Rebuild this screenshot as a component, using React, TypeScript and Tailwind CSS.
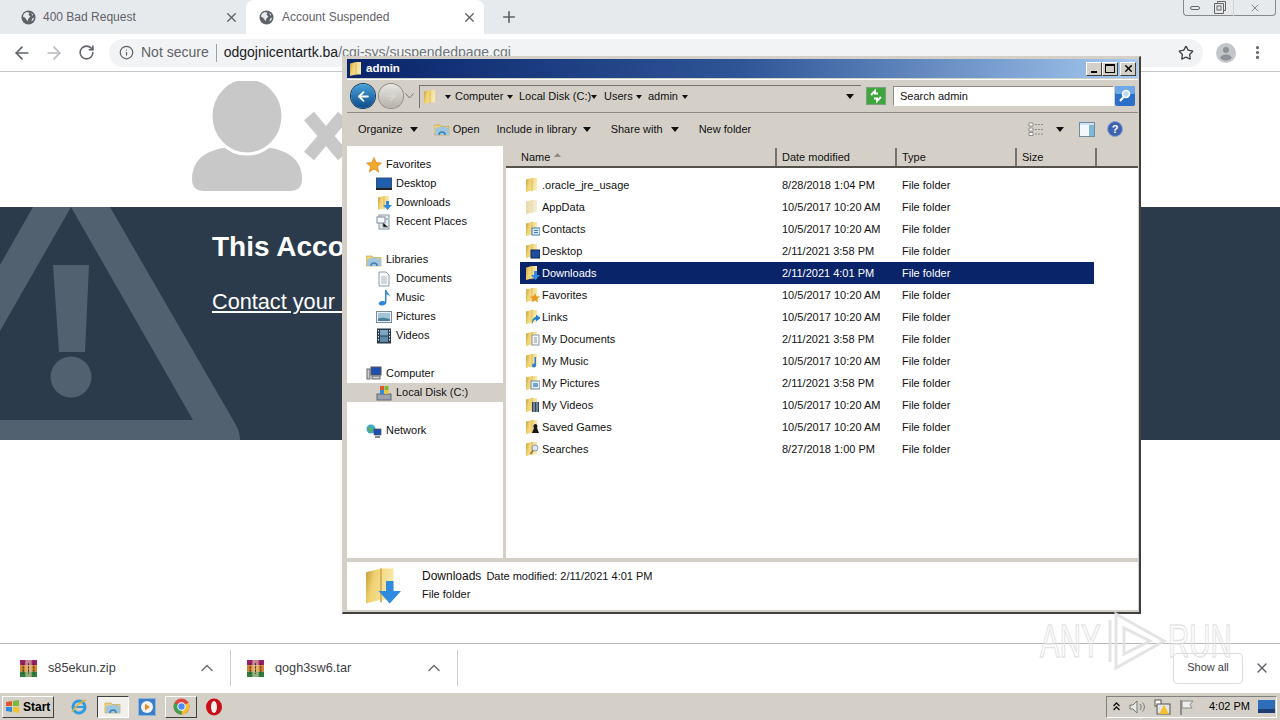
import {
  ArrowLeft,
  ArrowRight,
  ChevronUp,
  Info,
  MoreVertical,
  Plus,
  RotateCw,
  Star,
  X,
} from "lucide-react";

const FILES = [
  { name: ".oracle_jre_usage", date: "8/28/2018 1:04 PM", badge: "" },
  { name: "AppData", date: "10/5/2017 10:20 AM", badge: "pale" },
  { name: "Contacts", date: "10/5/2017 10:20 AM", badge: "contacts" },
  { name: "Desktop", date: "2/11/2021 3:58 PM", badge: "desktop" },
  { name: "Downloads", date: "2/11/2021 4:01 PM", badge: "down" },
  { name: "Favorites", date: "10/5/2017 10:20 AM", badge: "star" },
  { name: "Links", date: "10/5/2017 10:20 AM", badge: "link" },
  { name: "My Documents", date: "2/11/2021 3:58 PM", badge: "doc" },
  { name: "My Music", date: "10/5/2017 10:20 AM", badge: "music" },
  { name: "My Pictures", date: "2/11/2021 3:58 PM", badge: "pic" },
  { name: "My Videos", date: "10/5/2017 10:20 AM", badge: "video" },
  { name: "Saved Games", date: "10/5/2017 10:20 AM", badge: "games" },
  { name: "Searches", date: "8/27/2018 1:00 PM", badge: "search" },
];

function Badge({ kind }: { kind: string }) {
  switch (kind) {
    case "contacts":
      return (
        <>
          <rect x="8" y="7" width="8" height="7" fill="#dbe9f6" stroke="#3f7fb5" />
          <path d="M10 9.500h4M10 11.500h4" stroke="#3f7fb5" />
        </>
      );
    case "desktop":
      return <rect x="7" y="7" width="9" height="8" fill="#1d4f9c" stroke="#10264f" />;
    case "down":
      return <path d="M10 6h3v4h3l-4.500 5L7 10h3z" fill="#2f8be0" />;
    case "star":
      return <path d="M11 6l1.500 3.200 3.500.4-2.600 2.300.7 3.400-3.100-1.700-3.100 1.700.7-3.400L6 9.600l3.500-.4z" fill="#e89a1c" />;
    case "link":
      return <path d="M8 15c0-5 2-7 4-7V5.500L16.500 9 12 12.500V10.500c-2 0-3 2-4 4.500z" fill="#1f7fd0" />;
    case "doc":
      return (
        <>
          <rect x="8" y="4" width="7" height="10" fill="#f4f6f8" stroke="#8a97a5" />
          <path d="M10 7h3M10 9h3M10 11h3" stroke="#8a97a5" />
        </>
      );
    case "music":
      return <path d="M12 4v8.500a2 2 0 1 1-1.500-1.900V4z" fill="#2f7fd0" />;
    case "pic":
      return (
        <>
          <rect x="7" y="6" width="9" height="8" fill="#e6eef5" stroke="#7a8a99" />
          <rect x="9" y="8" width="5" height="4" fill="#6fa6c8" />
        </>
      );
    case "video":
      return (
        <>
          <rect x="8" y="5" width="7" height="10" fill="#34465a" />
          <path d="M10 5v10M13 5v10" stroke="#a9bfd2" />
        </>
      );
    case "games":
      return <path d="M11 5a2.500 2.500 0 0 1 2 4l2 5H8l2-5a2.500 2.500 0 0 1 1-4z" fill="#161616" />;
    case "search":
      return (
        <>
          <circle cx="11" cy="7" r="3" fill="#dfe8ef" stroke="#8c9aa8" />
          <path d="M9 9.500L6.500 13" stroke="#8c7440" strokeWidth="1.500" />
        </>
      );
    default:
      return null;
  }
}

// small win7 style folder, seen nearly edge on
function Folder({ badge = "", size = 16 }: { badge?: string; size?: number }) {
  const pale = badge === "pale";
  return (
    <svg width={size} height={size} viewBox="0 0 16 16" className="shrink-0">
      <defs>
        <linearGradient id="folderFace" x1="0" y1="0" x2="1" y2="0.3">
          <stop offset="0" stopColor="#c89b3a" />
          <stop offset="0.35" stopColor="#f0d272" />
          <stop offset="1" stopColor="#f8e9ae" />
        </linearGradient>
        <linearGradient id="folderPale" x1="0" y1="0" x2="1" y2="0">
          <stop offset="0" stopColor="#e6d6a6" />
          <stop offset="1" stopColor="#f8f0d6" />
        </linearGradient>
      </defs>
      <path d="M2 2.500L8 1h5v12.500H8L2 15z" fill={pale ? "url(#folderPale)" : "url(#folderFace)"} />
      <path d="M8 1v13.500" stroke={pale ? "#eadcb4" : "#d8b355"} strokeWidth=".8" />
      <Badge kind={badge} />
    </svg>
  );
}

function Globe() {
  return (
    <svg width="15" height="15" viewBox="0 0 16 16" className="shrink-0">
      <circle cx="8" cy="8" r="7.500" fill="#5f6368" />
      <path d="M3 4l3-2 3 1-1 2 2 2-2 2-1 3-2-3-1-1-2-1zM11 3l2 2-1 1zM12 9l2-1-1 3-2 1z" fill="#e7eaed" />
    </svg>
  );
}

function Tab({ title, active }: { title: string; active?: boolean }) {
  return (
    <div
      className={`flex h-[34px] w-[238px] items-center pl-[13px] pr-[6px] ${
        active ? "rounded-t-lg bg-white" : ""
      }`}
    >
      <Globe />
      <span className={`flex-1 text-[12px] text-[#5f6368] ${active ? "ml-[8px]" : "ml-[7px]"}`}>
        {title}
      </span>
      <X size={15} strokeWidth={2.2} className="mr-[1px] text-[#5f6368]" />
    </div>
  );
}

function WinRar() {
  return (
    <svg width="17" height="17" viewBox="0 0 16 16" className="shrink-0">
      <rect x="0" y="0" width="16" height="5" fill="#9c1f6a" />
      <rect x="0" y="5" width="16" height="6" fill="#d9832a" />
      <rect x="0" y="11" width="16" height="5" fill="#2f7d3a" />
      <rect x="5" y="0" width="6" height="16" fill="#e9d9b4" opacity="0.55" />
      <path d="M3 3v10M8 3v10M13 3v10" stroke="#3b2a1a" strokeWidth="1" strokeDasharray="2 1" />
    </svg>
  );
}

function DownloadItem({ name, className }: { name: string; className: string }) {
  return (
    <div className={`flex h-[36px] items-center border-r border-[#cfd1d3] ${className}`}>
      <WinRar />
      <span className="ml-[11px] flex-1 pt-[2px] text-[12.700px] text-[#3c4043]">{name}</span>
      <ChevronUp size={20} strokeWidth={2} className="mr-[13px] text-[#777]" />
    </div>
  );
}

function Caret({ className = "" }: { className?: string }) {
  return (
    <span
      className={`inline-block h-0 w-0 shrink-0 border-x-[3.500px] border-t-[4px] border-x-transparent border-t-[#111] ${className}`}
    />
  );
}

function NavRow({
  label,
  depth,
  icon,
  selected,
}: {
  label: string;
  depth: 0 | 1;
  icon: React.ReactNode;
  selected?: boolean;
}) {
  return (
    <div
      className={`flex h-[19px] items-center ${depth ? "pl-[29px]" : "pl-[19px]"} ${
        selected ? "bg-[#d4d0c8]" : ""
      }`}
    >
      <span className="flex w-[20px] shrink-0">{icon}</span>
      <span>{label}</span>
    </div>
  );
}

function Glyph({ children }: { children: React.ReactNode }) {
  return (
    <svg width="16" height="16" viewBox="0 0 16 16" className="shrink-0">
      {children}
    </svg>
  );
}

const LIBRARY_PATHS = (
  <>
    <path d="M0 4h6l1 1.500h8V14H0z" fill="#efd37c" stroke="#bf9a3c" strokeWidth=".6" />
    <path d="M1 8c2-3 12-3 14 0v6H1z" fill="#9fc6dd" />
    <path d="M5 14c0-4 6-4 6 0" fill="none" stroke="#3c7fb5" strokeWidth="1.500" />
  </>
);

const NAV_ICONS = {
  star: (
    <Glyph>
      <path d="M8 .5l2.200 5 5.300.5-4 3.500 1.200 5.500L8 12l-4.700 3 1.200-5.500-4-3.500 5.300-.5z" fill="#f3a92b" stroke="#c97a16" strokeWidth=".6" />
    </Glyph>
  ),
  desktop: (
    <Glyph>
      <rect x="0.500" y="2" width="15" height="10" fill="#1f5fb0" stroke="#33507a" />
      <rect x="0" y="12" width="16" height="2" fill="#222" />
    </Glyph>
  ),
  recent: (
    <Glyph>
      <rect x="3" y="1" width="10" height="14" fill="#e8ebee" stroke="#8c98a3" />
      <rect x="1" y="3" width="8" height="6" fill="#f6f8fa" stroke="#7f8b96" />
      <path d="M7 9v4h5M10 5h2" stroke="#77838e" />
    </Glyph>
  ),
  library: <Glyph>{LIBRARY_PATHS}</Glyph>,
  doc: (
    <Glyph>
      <path d="M3 1h7l3 3v11H3z" fill="#f8f9fb" stroke="#8d99a6" />
      <path d="M5 6h6M5 8h6M5 10h6M5 12h6" stroke="#aab4be" />
    </Glyph>
  ),
  music: (
    <Glyph>
      <path d="M9 0h1.500c0 3 3.500 3.500 3.500 7-1-2-2.500-2.500-3.500-2.500V12c0 2-2 3.500-4.500 3.500S2 14 3 12.500 7 10.500 9 11.500z" fill="#2f86d6" />
    </Glyph>
  ),
  picture: (
    <Glyph>
      <rect x="0.500" y="2.500" width="15" height="11" fill="#e9eef2" stroke="#7e8a96" />
      <rect x="2" y="4" width="12" height="8" fill="#9fc4da" />
      <path d="M2 10c3-2 6-1 12 0v2H2z" fill="#4e7f99" />
    </Glyph>
  ),
  video: (
    <Glyph>
      <rect x="1" y="0.500" width="14" height="15" fill="#2a3a4a" />
      <rect x="4" y="2" width="8" height="5.500" fill="#7fa6c4" />
      <rect x="4" y="8.500" width="8" height="5.500" fill="#5b8aa8" />
      <path d="M2.500 2v12M13.500 2v12" stroke="#dfe7ee" strokeDasharray="1.500 1.500" />
    </Glyph>
  ),
  computer: (
    <Glyph>
      <rect x="5" y="1" width="10" height="8" fill="#1f4fb0" stroke="#555" />
      <rect x="1" y="3" width="3" height="10" fill="#c9cdd2" stroke="#666" />
      <rect x="6" y="10" width="8" height="3" fill="#c9cdd2" stroke="#666" />
    </Glyph>
  ),
  disk: (
    <Glyph>
      <rect x="1" y="9" width="14" height="6" fill="#9ca4ab" stroke="#5f676e" />
      <rect x="4" y="1" width="4" height="4" fill="#e2562d" />
      <rect x="8.500" y="1" width="4" height="4" fill="#7cb83a" />
      <rect x="4" y="5" width="4" height="4" fill="#2f8be0" />
      <rect x="8.500" y="5" width="4" height="4" fill="#f2c12e" />
    </Glyph>
  ),
  network: (
    <Glyph>
      <circle cx="5" cy="6" r="4.500" fill="#3fa8c8" />
      <path d="M2 5c2-2 3 0 4 1s-1 3-2 3z" fill="#5fb04a" />
      <rect x="8" y="6" width="7" height="6" fill="#1f4fb0" stroke="#444" strokeWidth=".6" />
      <rect x="9" y="13" width="5" height="2" fill="#888" />
    </Glyph>
  ),
};

function ColHead({
  label,
  width,
  sorted,
}: {
  label: string;
  width: string;
  sorted?: boolean;
}) {
  return (
    <div className={`flex h-full items-center border-r-2 border-r-[#77736c] pl-[5px] ${width}`}>
      {label}
      {sorted && (
        <svg width="7" height="4" viewBox="0 0 7 4" className="mb-[4px] ml-[4px]">
          <path d="M0 4l3.500-4L7 4z" fill="#8f8b84" />
        </svg>
      )}
    </div>
  );
}

function ExplorerWindow() {
  return (
    <div className="absolute left-[342px] top-[56px] flex h-[558px] w-[799px] flex-col border border-b-2 border-r-2 border-[#d4d0c8] border-b-[#404040] border-r-[#404040] bg-[#d4d0c8] pb-[2px] pl-[4px] pr-[1px] pt-[2px] font-['Liberation_Sans',sans-serif] text-[11px] text-[#111]">
      {/* title bar */}
      <div className="flex h-[19px] shrink-0 items-center bg-gradient-to-r from-[#0a246a] via-[#2f5597] to-[#a6caf0] pl-[1px] pr-[2px]">
        <Folder />
        <span className="ml-[2px] flex-1 text-[11.500px] font-bold text-white">admin</span>
        <div className="flex h-[14px] items-center">
          <span className="flex h-[14px] w-[16px] items-end justify-center border border-b-[#404040] border-l-white border-r-[#404040] border-t-white bg-[#d4d0c8] pb-[2px]">
            <span className="h-[2px] w-[6px] bg-black" />
          </span>
          <span className="flex h-[14px] w-[16px] items-center justify-center border border-b-[#404040] border-l-white border-r-[#404040] border-t-white bg-[#d4d0c8]">
            <span className="h-[9px] w-[10px] border border-t-2 border-black" />
          </span>
          <span className="ml-[2px] flex h-[14px] w-[16px] items-center justify-center border border-b-[#404040] border-l-white border-r-[#404040] border-t-white bg-[#d4d0c8]">
            <X size={11} strokeWidth={3} className="text-black" />
          </span>
        </div>
      </div>

      {/* address row */}
      <div className="mt-[1px] flex h-[34px] shrink-0 items-center border-y border-y-[#8f8b84] border-t-white bg-[#d4d0c8] pl-[4px]">
        <span className="flex h-[24px] w-[24px] items-center justify-center rounded-full bg-gradient-to-b from-[#4aa3d8] to-[#0b4d8c] ring-1 ring-[#0c3c66]">
          <ArrowLeft size={15} strokeWidth={3} className="text-white" />
        </span>
        <span className="ml-[4px] flex h-[24px] w-[24px] items-center justify-center rounded-full bg-gradient-to-b from-[#e8e6e1] to-[#b5b2ab] ring-1 ring-[#8f8b84]">
          <ArrowRight size={14} strokeWidth={2.5} className="text-[#d9d7d1]" />
        </span>
        <svg width="9" height="6" viewBox="0 0 9 6" className="ml-[2px]">
          <path d="M.5.5L4.500 5 8.500.5" fill="none" stroke="#777" />
        </svg>
        <div className="ml-[5px] flex h-[23px] w-[442px] items-center border-l border-t border-[#77736c] border-b-white border-r-white pl-[2px]">
          <Folder />
          <Caret className="ml-[7px]" />
          <span className="ml-[4px] w-[52px]">Computer</span>
          <Caret />
          <span className="ml-[6px] w-[72px] whitespace-nowrap">Local Disk (C:)</span>
          <Caret />
          <span className="ml-[7px] w-[32px]">Users</span>
          <Caret />
          <span className="ml-[6px] w-[34px]">admin</span>
          <Caret />
          <Caret className="ml-auto mr-[7px] border-x-[4px] border-t-[5px]" />
        </div>
        <svg width="20" height="18" viewBox="0 0 20 18" className="ml-[5px]">
          <rect x="0.500" y="0.500" width="19" height="17" fill="#3fa63f" stroke="#7f9f7f" />
          <path d="M5 8l4-4v2.500h3M15 10l-4 4v-2.500H8" fill="none" stroke="#fff" strokeWidth="2" />
        </svg>
        <div className="ml-[7px] flex h-[20px] w-[221px] items-center border border-[#8f8b84] border-b-white border-r-white bg-white pl-[6px] text-[11px]">
          Search admin
        </div>
        <svg width="20" height="20" viewBox="0 0 20 20" className="ml-[1px]">
          <rect width="20" height="20" rx="2" fill="#2a70c8" />
          <rect width="20" height="8" rx="2" fill="#6ea8e8" />
          <circle cx="11" cy="8" r="3.500" fill="#bcdcf5" stroke="#fff" strokeWidth="1.500" />
          <path d="M8.500 11L5 15" stroke="#fff" strokeWidth="2" />
        </svg>
      </div>

      {/* command bar */}
      <div className="flex h-[33px] shrink-0 items-center pb-[1px] pl-[11px]">
        <span>Organize</span>
        <Caret className="ml-[7px] border-x-[4px] border-t-[5px]" />
        <span className="ml-[16px]">
          <Glyph>{LIBRARY_PATHS}</Glyph>
        </span>
        <span className="ml-[3px]">Open</span>
        <span className="ml-[17px]">Include in library</span>
        <Caret className="ml-[6px] border-x-[4px] border-t-[5px]" />
        <span className="ml-[20px]">Share with</span>
        <Caret className="ml-[8px] border-x-[4px] border-t-[5px]" />
        <span className="ml-[20px]">New folder</span>
        <div className="ml-auto flex items-center pr-[15px]">
          <svg width="16" height="14" viewBox="0 0 16 14">
            <path d="M1 1h4v3H1zM1 6h4v3H1zM1 10.500h4v3H1z" fill="#fff" stroke="#6a6a6a" strokeWidth=".7" />
            <path d="M7 2.500h8M7 7.500h8M7 12h8" stroke="#8a8a8a" strokeDasharray="2 1" />
          </svg>
          <Caret className="ml-[12px] border-x-[4px] border-t-[5px]" />
          <svg width="16" height="15" viewBox="0 0 16 15" className="ml-[15px]">
            <rect x="0.500" y="0.500" width="15" height="14" fill="#f2f8fc" stroke="#6d8ca3" />
            <rect x="10" y="3" width="5" height="11" fill="#7fb8d6" />
            <rect x="1" y="1" width="14" height="2" fill="#cfe3f0" />
          </svg>
          <svg width="16" height="16" viewBox="0 0 16 16" className="ml-[12px]">
            <circle cx="8" cy="8" r="7.500" fill="#3f62b0" stroke="#8fa3d0" />
            <text x="8" y="12" textAnchor="middle" fontSize="11" fontWeight="700" fill="#fff" fontFamily="Liberation Sans">?</text>
          </svg>
        </div>
      </div>

      {/* panes */}
      <div className="flex min-h-0 flex-1">
        <div className="flex w-[156px] shrink-0 flex-col bg-white pt-[9px]">
          <NavRow label="Favorites" depth={0} icon={NAV_ICONS.star} />
          <NavRow label="Desktop" depth={1} icon={NAV_ICONS.desktop} />
          <NavRow label="Downloads" depth={1} icon={<Folder badge="down" />} />
          <NavRow label="Recent Places" depth={1} icon={NAV_ICONS.recent} />
          <div className="h-[19px]" />
          <NavRow label="Libraries" depth={0} icon={NAV_ICONS.library} />
          <NavRow label="Documents" depth={1} icon={NAV_ICONS.doc} />
          <NavRow label="Music" depth={1} icon={NAV_ICONS.music} />
          <NavRow label="Pictures" depth={1} icon={NAV_ICONS.picture} />
          <NavRow label="Videos" depth={1} icon={NAV_ICONS.video} />
          <div className="h-[19px]" />
          <NavRow label="Computer" depth={0} icon={NAV_ICONS.computer} />
          <NavRow label="Local Disk (C:)" depth={1} icon={NAV_ICONS.disk} selected />
          <div className="h-[19px]" />
          <NavRow label="Network" depth={0} icon={NAV_ICONS.network} />
        </div>
        <div className="w-[3px] shrink-0 bg-[#d4d0c8]" />
        <div className="flex min-w-0 flex-1 flex-col bg-white">
          <div className="flex h-[22px] shrink-0 items-center border-b-2 border-[#55524c] bg-[#d4d0c8] pl-[10px] pt-[2px]">
            <ColHead label="Name" width="w-[261px]" sorted />
            <ColHead label="Date modified" width="w-[120px]" />
            <ColHead label="Type" width="w-[120px]" />
            <ColHead label="Size" width="w-[80px]" />
          </div>
          <div className="flex flex-col pl-[14px] pr-[44px] pt-[6px]">
            {FILES.map((f) => {
              const selected = f.name === "Downloads";
              return (
                <div
                  key={f.name}
                  className={`flex h-[22px] items-center pl-[4px] ${
                    selected ? "bg-[#0a246a] text-white" : ""
                  }`}
                >
                  <Folder badge={f.badge} />
                  <span className="ml-[2px] w-[240px]">{f.name}</span>
                  <span className="w-[120px]">{f.date}</span>
                  <span>File folder</span>
                </div>
              );
            })}
          </div>
        </div>
      </div>

      {/* details pane */}
      <div className="mt-[4px] flex h-[48px] shrink-0 items-center bg-white pl-[14px]">
        <Folder badge="down" size={40} />
        <div className="ml-[21px] flex flex-col gap-[1px] pb-[3px]">
          <div className="flex items-baseline">
            <span className="text-[12px]">Downloads</span>
            <span className="ml-[5px]">Date modified: 2/11/2021 4:01 PM</span>
          </div>
          <span>File folder</span>
        </div>
      </div>
    </div>
  );
}

function Watermark() {
  return (
    <div className="pointer-events-none absolute left-[1040px] top-[608px] flex h-[66px] w-[200px] items-center opacity-90">
      <span className="w-[68px] origin-left scale-x-[0.64] font-['Liberation_Sans',sans-serif] text-[46px] text-transparent [-webkit-text-stroke:1.500px_#e2e2e2]">
        ANY
      </span>
      <svg width="60" height="66" viewBox="0 0 60 66" className="shrink-0">
        <path d="M8 6l48 27L8 60zM16 20v26l26-13z" fill="none" stroke="#e2e2e2" strokeWidth="3" />
        <path d="M2 12v42" stroke="#e2e2e2" strokeWidth="3" />
      </svg>
      <span className="w-[70px] origin-left scale-x-[0.64] font-['Liberation_Sans',sans-serif] text-[46px] text-transparent [-webkit-text-stroke:1.500px_#e2e2e2]">
        RUN
      </span>
    </div>
  );
}

export default function App() {
  return (
    <div className="relative flex h-[720px] w-[1280px] flex-col overflow-hidden bg-white font-['Liberation_Sans',sans-serif]">
      {/* tab strip */}
      <div className="flex h-[34px] shrink-0 items-center bg-[#e7eaed] pl-[8px]">
        <Tab title="400 Bad Request" />
        <Tab title="Account Suspended" active />
        <Plus size={18} strokeWidth={2.2} className="ml-[16px] text-[#5f6368]" />
        <div className="mb-[18px] ml-auto mr-[4px] flex h-[16px] w-[93px] items-center rounded-b border border-t-0 border-[#888] pl-[6px] text-[#666]">
          <span className="h-[4px] w-[10px] rounded-sm border border-[#666]" />
          <svg width="12" height="13" viewBox="0 0 12 13" className="ml-[14px]">
            <path d="M3.500 2.500v-2h8v9h-2M.5 2.500h9v10h-9z" fill="none" stroke="#666" />
            <rect x="3" y="5" width="4" height="4" fill="none" stroke="#666" />
          </svg>
          <span className="ml-[7px] h-[16px] w-px bg-[#d0d2d4]" />
          <X size={12} strokeWidth={1.5} className="ml-[15px]" />
        </div>
      </div>

      {/* omnibox row */}
      <div className="flex h-[38px] shrink-0 items-center border-b border-[#c4c6c8] bg-white pl-[12px]">
        <ArrowLeft size={20} strokeWidth={2} className="text-[#5f6368]" />
        <ArrowRight size={20} strokeWidth={2} className="ml-[12px] text-[#b6b9bd]" />
        <RotateCw size={17} strokeWidth={2.2} className="ml-[14px] text-[#5f6368]" />
        <div className="ml-[14px] flex h-[28px] w-[1094px] items-center rounded-full bg-[#f1f3f4] pl-[10px] text-[14px]">
          <Info size={15} strokeWidth={2} className="text-[#5f6368]" />
          <span className="ml-[7px] text-[#5f6368]">Not secure</span>
          <span className="ml-[7px] h-[18px] w-px bg-[#9aa0a6]" />
          <span className="ml-[7px] text-[#202124]">odgojnicentartk.ba</span>
          <span className="text-[#70757a]">/cgi-sys/suspendedpage.cgi</span>
          <Star size={16} strokeWidth={2} className="ml-auto mr-[9px] text-[#444]" />
        </div>
        <span className="ml-[13px] flex h-[20px] w-[20px] items-center justify-center rounded-full bg-[#c4c7ca]">
          <svg width="14" height="16" viewBox="0 0 14 16">
            <circle cx="7" cy="5" r="3" fill="#8d9094" />
            <ellipse cx="7" cy="12.500" rx="5.500" ry="3" fill="#8d9094" />
          </svg>
        </span>
        <MoreVertical size={17} strokeWidth={2.5} className="ml-[13px] text-[#5f6368]" />
      </div>

      {/* page */}
      <div className="flex min-h-0 flex-1 flex-col">
        <div className="flex h-[135px] shrink-0 items-start pl-[192px] pt-[9px]">
          <svg width="110" height="110" viewBox="0 0 110 110">
            <path d="M0 98c0-22 18-30 38-32h34c20 2 38 10 38 32 0 8-4 12-12 12H12C4 110 0 106 0 98z" fill="#c8c8c8" />
            <ellipse cx="55" cy="35" rx="36" ry="38" fill="#c8c8c8" stroke="#fff" strokeWidth="3" />
          </svg>
          <svg width="46" height="52" viewBox="0 0 46 52" className="ml-[1px] mt-[29px]">
            <path d="M6 6l34 40M40 6L6 46" stroke="#c8c8c8" strokeWidth="13" />
          </svg>
        </div>
        <div className="relative h-[233px] shrink-0 overflow-hidden bg-[#2b3b4c] pl-[212px] pt-[23px] text-white">
          <svg width="245" height="233" viewBox="0 0 245 233" className="absolute left-0 top-0">
            <path
              fillRule="evenodd"
              d="M33 0H110L236 218Q240 226 240 233H0V58ZM71 0L193 213H0V124Z"
              fill="#526170"
            />
            <path d="M53 58H89L85 145H59Z" fill="#526170" />
            <circle cx="71" cy="170" r="20.500" fill="#526170" />
          </svg>
          {/* the rest of both lines sits behind the explorer window */}
          <h1 className="relative whitespace-nowrap text-[28px] font-bold leading-[34px]">
            This Account has been suspended
          </h1>
          <p className="relative mt-[25px] whitespace-nowrap text-[21.700px] leading-[26px] underline">
            Contact your hosting provider for more information.
          </p>
        </div>
        <div className="flex-1" />
      </div>

      {/* download shelf */}
      <div className="flex h-[49px] shrink-0 items-center border-t border-[#b9b9b9] bg-white">
        <DownloadItem name="s85ekun.zip" className="w-[231px] pl-[20px]" />
        <DownloadItem name="qogh3sw6.tar" className="w-[227px] pl-[16px]" />
        <div className="ml-auto flex h-[31px] w-[70px] items-center justify-center rounded border border-[#dadce0] pb-[2px] text-[11px] text-[#3c4043]">
          Show all
        </div>
        <X size={16} strokeWidth={2} className="ml-[11px] mr-[10px] text-[#5f6368]" />
      </div>

      {/* taskbar */}
      <div className="flex h-[28px] shrink-0 items-center border-t border-white bg-[#d4d0c8] pl-[2px] pr-[3px] text-[11px] text-black">
        <div className="flex h-[22px] w-[52px] items-center border border-b-[#404040] border-l-white border-r-[#404040] border-t-white pl-[2px] font-bold">
          <svg width="16" height="16" viewBox="0 0 16 16" className="shrink-0">
            <path d="M1 3l6-1v5H1z" fill="#e2562d" />
            <path d="M8 2l6-1v6H8z" fill="#7cb83a" />
            <path d="M1 8h6v5l-6-1z" fill="#2f8be0" />
            <path d="M8 8h6v6l-6-1z" fill="#f2c12e" />
          </svg>
          <span className="ml-[2px] text-[12px]">Start</span>
        </div>
        <svg width="18" height="18" viewBox="0 0 18 18" className="ml-[16px] mr-[9px]">
          <circle cx="9" cy="9" r="6" fill="none" stroke="#2f9be0" strokeWidth="3" />
          <path d="M3 9h12" stroke="#2f9be0" strokeWidth="2" />
          <path d="M2 14C6 8 12 3 16 2" fill="none" stroke="#e6b32e" strokeWidth="1.500" />
        </svg>
        <div className="flex h-[22px] w-[32px] items-center justify-center border border-b-white border-l-[#404040] border-r-white border-t-[#404040] bg-[#f2f0ec]">
          <svg width="18" height="16" viewBox="0 0 16 16">
            {LIBRARY_PATHS}
          </svg>
        </div>
        <svg width="18" height="18" viewBox="0 0 18 18" className="ml-[9px]">
          <rect x="0.500" y="0.500" width="17" height="17" fill="#3c7fc8" stroke="#8fb5da" />
          <circle cx="9" cy="9" r="6" fill="#f0f4f8" />
          <path d="M7 5.500l5 3.500-5 3.500z" fill="#f08a1c" />
        </svg>
        <div className="ml-[9px] flex h-[22px] w-[32px] items-center justify-center border border-b-[#404040] border-l-white border-r-[#404040] border-t-white">
          <svg width="17" height="17" viewBox="0 0 16 16">
            <circle cx="8" cy="8" r="7.500" fill="#d9483b" />
            <path d="M8 8L14.500 4.500A7.500 7.500 0 0 1 8 15.500z" fill="#f2c12e" />
            <path d="M8 8L8 15.500A7.500 7.500 0 0 1 1.500 4.500z" fill="#3da44d" />
            <circle cx="8" cy="8" r="3.500" fill="#4a8bf5" stroke="#fff" />
          </svg>
        </div>
        <svg width="18" height="18" viewBox="0 0 18 18" className="ml-[8px]">
          <ellipse cx="9" cy="9" rx="8" ry="8.500" fill="#c9101a" />
          <ellipse cx="9" cy="9" rx="3" ry="6" fill="#f6f0ef" />
        </svg>
        <div className="ml-auto flex h-[22px] w-[171px] items-center border border-b-white border-l-[#808080] border-r-white border-t-[#808080] pl-[6px]">
          <svg width="7" height="9" viewBox="0 0 7 9">
            <path d="M.5 4L3.500 1l3 3M.5 8L3.500 5l3 3" fill="none" stroke="#111" strokeWidth="1.300" />
          </svg>
          <svg width="17" height="16" viewBox="0 0 17 16" className="ml-[9px]">
            <path d="M1 6h3l4-4v12l-4-4H1z" fill="#e8e8e8" stroke="#777" />
            <path d="M11 5c1.500 2 1.500 4 0 6M13.500 3.500c2.500 3 2.500 6 0 9" fill="none" stroke="#777" />
          </svg>
          <svg width="17" height="16" viewBox="0 0 17 16" className="ml-[8px]">
            <rect x="1" y="1" width="6" height="6" fill="#fff" stroke="#555" />
            <rect x="3" y="5" width="13" height="10" fill="#e5e5e5" stroke="#555" />
            <path d="M10 6l5 9H5z" fill="#f2c12e" />
          </svg>
          <svg width="16" height="16" viewBox="0 0 16 16" className="ml-[8px]">
            <path d="M2 1v15" stroke="#777" strokeWidth="1.500" />
            <path d="M3 2h11l-3 3.500 2 3.500H3z" fill="#eee" stroke="#888" />
          </svg>
          <span className="ml-[14px] whitespace-nowrap text-[11px]">4:02 PM</span>
          <svg width="17" height="13" viewBox="0 0 17 13" className="ml-auto mr-[1px]">
            <rect width="17" height="13" fill="#2e6db8" />
            <rect y="9" width="17" height="4" fill="#1c3f73" />
          </svg>
        </div>
      </div>

      <ExplorerWindow />
      <Watermark />
    </div>
  );
}
